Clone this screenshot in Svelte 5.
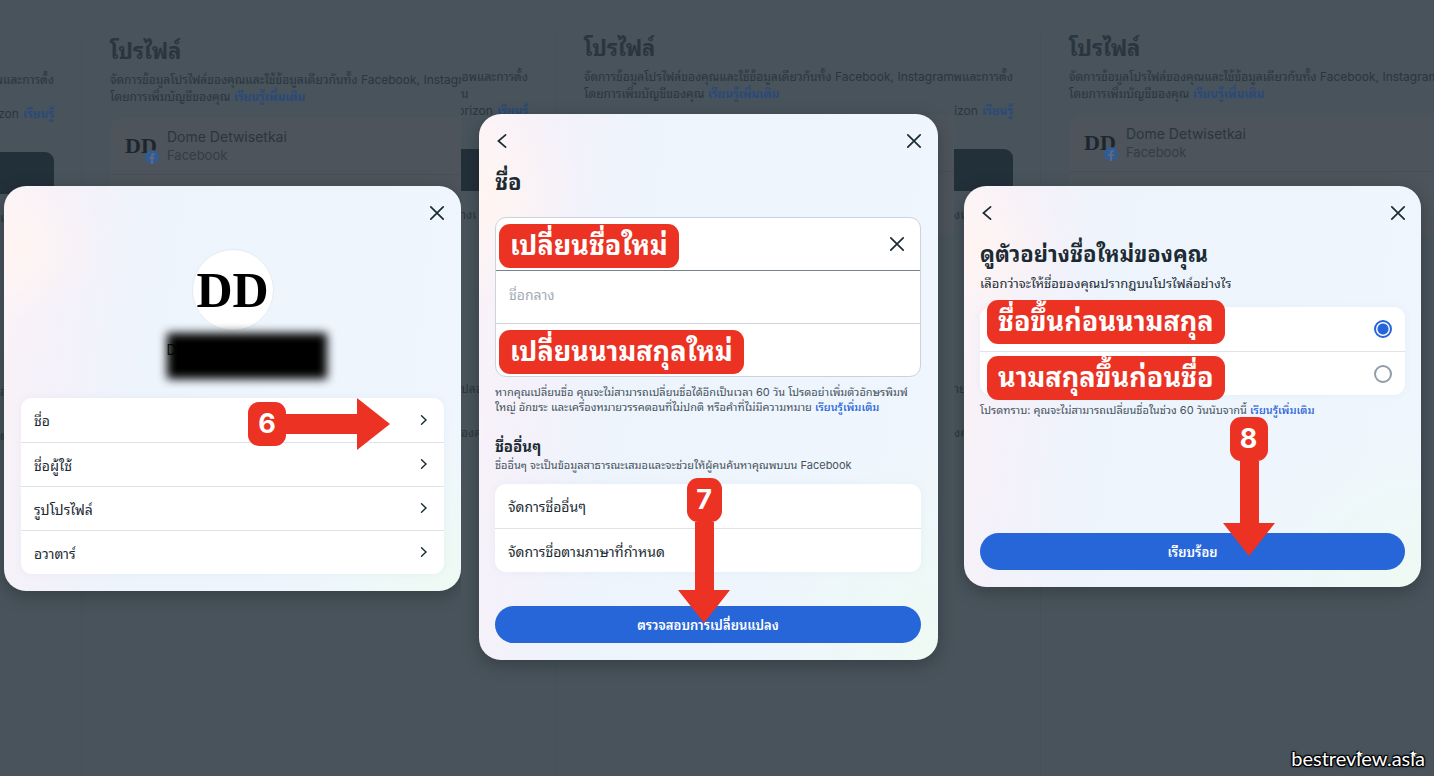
<script lang="ts">
	const rows = ['ชื่อ', 'ชื่อผู้ใช้', 'รูปโปรไฟล์', 'อวาตาร์'];
	const otherNames = ['จัดการชื่ออื่นๆ', 'จัดการชื่อตามภาษาที่กำหนด'];

	const orders = [
		{ value: 'first', label: 'ชื่อขึ้นก่อนนามสกุล' },
		{ value: 'last', label: 'นามสกุลขึ้นก่อนชื่อ' }
	];

	let order = $state('first');
	let firstName = $state('');
	let middleName = $state('');
	let lastName = $state('');
</script>

{#snippet closeIcon()}
	<svg width="16" height="16" viewBox="0 0 16 16" aria-hidden="true">
		<path d="M1.8 1.8l12.4 12.4M14.2 1.8L1.8 14.2" />
	</svg>
{/snippet}

{#snippet backIcon()}
	<svg width="16" height="16" viewBox="0 0 16 16" aria-hidden="true">
		<path d="M10.6 1.8L3.4 8l7.2 6.2" />
	</svg>
{/snippet}

{#snippet header(back)}
	<header>
		{#if back}
			<button class="icon" aria-label="ย้อนกลับ">{@render backIcon()}</button>
		{/if}
		<button class="icon close" aria-label="ปิด">{@render closeIcon()}</button>
	</header>
{/snippet}

<!-- The dimmed accounts page behind each dialog -->
{#snippet page(top, middle, horizon, cut)}
	<div class="page">
		<aside>
			<p class="end">{top}</p>
			<p>{middle}</p>
			<p class="end">{horizon} <a href="#learn">เรียนรู้</a></p>
			<div class="nav"></div>
			<p class="cut">{cut[0]}</p>
			<p class="cut far">{cut[1]}</p>
			<p class="cut">{cut[2]}</p>
		</aside>
		<main>
			<h2>โปรไฟล์</h2>
			<p>จัดการข้อมูลโปรไฟล์ของคุณและใช้ข้อมูลเดียวกันทั้ง Facebook, Instagram</p>
			<p>โดยการเพิ่มบัญชีของคุณ <a href="#learn">เรียนรู้เพิ่มเติม</a></p>
			<div class="profile">
				<div class="person">
					<div class="mini">
						DD
						<svg width="14" height="14" viewBox="0 0 14 14" aria-hidden="true">
							<circle cx="7" cy="7" r="7" fill="#315b92" />
							<path
								d="M6 14V9H4.4V7H6V5.7C6 4 7 3.1 8.5 3.1l1.3.1v1.7H9c-.8 0-1 .5-1 1V7h1.8l-.3 2H8v5z"
								fill="#5b6a7c"
							/>
						</svg>
					</div>
					<div>
						<div class="who">Dome Detwisetkai</div>
						<div class="where">Facebook</div>
					</div>
				</div>
			</div>
		</main>
	</div>
{/snippet}

{#snippet arrowRight(step)}
	<div class="marker right">
		<span class="step">{step}</span>
		<svg width="104" height="52" viewBox="0 0 104 52" aria-hidden="true">
			<path d="M0 16h71V0l33 26-33 26V36H0z" />
		</svg>
	</div>
{/snippet}

{#snippet arrowDown(step, shaft, place)}
	<div class="marker down {place}">
		<span class="step">{step}</span>
		<svg width="52" height={shaft + 33} viewBox="0 0 52 {shaft + 33}" aria-hidden="true">
			<path d="M17 0v{shaft}H0l26 33 26-33H36V0z" />
		</svg>
	</div>
{/snippet}

<div class="board">
	<div class="panel first">
		{@render page('พและการตั้ง', '', 'zon', ['เ', 'อ', 'ต'])}
		<section class="dialog" aria-label="โปรไฟล์">
			{@render header(false)}
			<div class="avatar">DD</div>
			<div class="redacted"><span>D</span></div>
			<ul class="list">
				{#each rows as row, i}
					<li>
						<button class="row">
							{row}
							<svg width="8" height="12" viewBox="0 0 8 12" aria-hidden="true">
								<path d="M1.5 1.8L6 6l-4.5 4.2" />
							</svg>
						</button>
						{#if i === 0}{@render arrowRight(6)}{/if}
					</li>
				{/each}
			</ul>
		</section>
	</div>

	<div class="panel second">
		{@render page('อพและการตั้ง', 'น', 'orizon', ['างเ', 'ปลอ', 'องค'])}
		<section class="dialog" aria-labelledby="name-title">
			{@render header(true)}
			<h1 id="name-title">ชื่อ</h1>
			<div class="fields">
				<div class="field active">
					<input type="text" aria-labelledby="tag-first" bind:value={firstName} />
					<span class="tag" id="tag-first">เปลี่ยนชื่อใหม่</span>
					<button class="icon" aria-label="ล้าง" onclick={() => (firstName = '')}>
						{@render closeIcon()}
					</button>
				</div>
				<div class="field">
					<input
						type="text"
						placeholder="ชื่อกลาง"
						aria-label="ชื่อกลาง"
						bind:value={middleName}
					/>
				</div>
				<div class="field">
					<input type="text" aria-labelledby="tag-last" bind:value={lastName} />
					<span class="tag" id="tag-last">เปลี่ยนนามสกุลใหม่</span>
				</div>
			</div>
			<p class="note">
				หากคุณเปลี่ยนชื่อ คุณจะไม่สามารถเปลี่ยนชื่อได้อีกเป็นเวลา 60 วัน โปรดอย่าเพิ่มตัวอักษรพิมพ์<br />
				ใหญ่ อักขระ และเครื่องหมายวรรคตอนที่ไม่ปกติ หรือคำที่ไม่มีความหมาย
				<a href="#learn">เรียนรู้เพิ่มเติม</a>
			</p>
			<h3>ชื่ออื่นๆ</h3>
			<p class="note tight">ชื่ออื่นๆ จะเป็นข้อมูลสาธารณะเสมอและจะช่วยให้ผู้คนค้นหาคุณพบบน Facebook</p>
			<ul class="list">
				{#each otherNames as name}
					<li><button class="row">{name}</button></li>
				{/each}
			</ul>
			<div class="action">
				<button class="primary">ตรวจสอบการเปลี่ยนแปลง</button>
				{@render arrowDown(7, 68, 'seven')}
			</div>
		</section>
	</div>

	<div class="panel third">
		{@render page('พและการตั้ง', '', 'rizon', ['งเ', 'าย', 'งค'])}
		<section class="dialog" aria-labelledby="preview-title">
			{@render header(true)}
			<h1 id="preview-title">ดูตัวอย่างชื่อใหม่ของคุณ</h1>
			<p class="lead">เลือกว่าจะให้ชื่อของคุณปรากฏบนโปรไฟล์อย่างไร</p>
			<ul class="list">
				{#each orders as item}
					<li>
						<label class="row">
							<span class="tag">{item.label}</span>
							<input type="radio" name="order" value={item.value} bind:group={order} />
						</label>
					</li>
				{/each}
			</ul>
			<p class="note">
				โปรดทราบ: คุณจะไม่สามารถเปลี่ยนชื่อในช่วง 60 วันนับจากนี้
				<a href="#learn">เรียนรู้เพิ่มเติม</a>
			</p>
			<div class="action">
				<button class="primary">เรียบร้อย</button>
				{@render arrowDown(8, 62, 'eight')}
			</div>
		</section>
	</div>

	<div class="watermark">bestrev<span class="star">i</span>ew.as<span class="star">i</span>a</div>
</div>

<style>
	:global(body) {
		margin: 0;
		background: #48535b;
	}

	.board {
		position: relative;
		display: grid;
		grid-template-columns: 461fr 493fr 480fr;
		min-height: 100vh;
		font-family: Inter, 'Noto Sans Thai Looped', 'Noto Looped Thai', Loma, 'Noto Sans Thai', 'Noto Sans', sans-serif;
		color: #1c2b33;
	}

	h1,
	h2,
	h3,
	p,
	ul {
		margin: 0;
		padding: 0;
	}

	ul {
		list-style: none;
	}

	button,
	input {
		font: inherit;
		color: inherit;
	}

	a {
		color: #2360d6;
		font-weight: 500;
		text-decoration: none;
	}

	svg {
		display: block;
		flex: none;
	}

	/* Page and dialog share one grid cell */
	.panel {
		display: grid;
		grid-template: 1fr / minmax(0, 1fr);
		align-items: center;
		overflow: hidden;
	}

	.panel > :global(*) {
		grid-area: 1 / 1;
	}

	/* Dimmed page */
	.page {
		align-self: stretch;
		display: grid;
		grid-template-columns: 95px minmax(0, 1fr);
		padding-top: 34px;
		background: #48535b;
		color: #2a363f;
		font-size: 12px;
		line-height: 17px;
		white-space: nowrap;
		overflow: hidden;
	}

	.first .page {
		grid-template-columns: 82px minmax(0, 1fr);
		padding-top: 37px;
	}

	.third .page {
		grid-template-columns: 87px minmax(0, 1fr);
	}

	.page a {
		color: #27497c;
		font-weight: 600;
	}

	aside {
		padding: 34px 27px 0 0;
		border-right: 1px solid #465058;
		box-sizing: border-box;
	}

	aside p {
		height: 17px;
	}

	aside .end {
		display: flex;
		justify-content: flex-end;
		gap: 4px;
	}

	aside .nav {
		height: 42px;
		margin-top: 30px;
		border-radius: 0 9px 0 0;
		background: #22303a;
	}

	aside .cut {
		margin: 15px 0 27px;
	}

	aside .far {
		margin-top: 157px;
	}

	main {
		padding-left: 28px;
	}

	h2 {
		height: 34px;
		font-size: 22px;
		line-height: 28px;
	}

	.profile {
		height: 120px;
		margin-top: 13px;
		border-radius: 10px 0 0 10px;
		background: #4d545b;
	}

	.person {
		display: flex;
		align-items: center;
		gap: 8px;
		height: 56px;
		padding-left: 15px;
		border-bottom: 1px solid #474f57;
	}

	.mini {
		position: relative;
		width: 34px;
		color: #1e262d;
		font: bold 22px / 28px 'Liberation Serif', serif;
	}

	.mini svg {
		position: absolute;
		right: 0;
		bottom: -4px;
	}

	.who {
		font-size: 14px;
		line-height: 18px;
	}

	.where {
		font-size: 13px;
		line-height: 18px;
		color: #333d46;
	}

	/* Dialogs */
	.dialog {
		position: relative;
		box-sizing: border-box;
		margin: 0 16px 3px 18px;
		padding: 0 17px 17px 16px;
		border-radius: 22px;
		background:
			radial-gradient(ellipse at 100% 100%, #eefaf3 0, #eefaf300 30%),
			radial-gradient(ellipse at 0 15%, #fff5f2 0, #fff5f200 16%),
			linear-gradient(97deg, #fbf3f7 0, #f4f1fa 15%, #edf4fc 33%, #eff6fe 100%);
		box-shadow: 0 5px 18px #00000040;
	}

	.first .dialog {
		margin: 0 0 0 4px;
		padding-left: 17px;
	}

	.third .dialog {
		margin: 0 13px 3px 10px;
		padding-right: 16px;
	}

	header {
		display: flex;
		align-items: center;
		height: 54px;
		margin-right: -1px;
	}

	.icon {
		display: grid;
		place-items: center;
		padding: 0;
		border: 0;
		background: none;
		cursor: pointer;
	}

	.icon path,
	.row path {
		fill: none;
		stroke: #1c2b33;
		stroke-width: 1.7;
		stroke-linecap: round;
	}

	.row path {
		stroke-width: 1.4;
	}

	.close {
		margin-left: auto;
	}

	h1 {
		font-size: 22px;
		line-height: 28px;
	}

	h3 {
		margin-top: 22px;
		font-size: 15px;
		line-height: 20px;
	}

	.avatar {
		box-sizing: border-box;
		width: 82px;
		height: 82px;
		margin: 9px auto 0;
		border: 1px solid #e6ebf1;
		border-radius: 50%;
		background: #fff;
		color: #000;
		font: bold 50px / 80px 'Liberation Serif', serif;
		display: flex;
		justify-content: center;
	}

	.redacted {
		position: relative;
		width: 160px;
		height: 46px;
		margin: 2px auto 19px;
		left: 14px;
		font-size: 14px;
		line-height: 34px;
	}

	.redacted::before {
		content: '';
		position: absolute;
		inset: 0;
		background: #000;
		filter: blur(5px);
	}

	.list {
		border-radius: 11px;
		background: #fff;
		box-shadow: 0 0 8px #3c50780d;
	}

	.list li {
		position: relative;
	}

	.list li + li {
		border-top: 1px solid #dee3e8;
	}

	.row {
		display: flex;
		align-items: center;
		justify-content: space-between;
		box-sizing: border-box;
		width: 100%;
		height: 44px;
		padding: 0 16px 0 13px;
		border: 0;
		background: none;
		font-size: 14px;
		text-align: left;
		cursor: pointer;
	}

	.list li + li .row {
		height: 43px;
	}

	.fields {
		margin-top: 21px;
		border: 1px solid #ccd3da;
		border-radius: 11px;
		background: #fff;
	}

	.field {
		position: relative;
		display: flex;
		align-items: center;
		height: 52px;
		padding: 0 15px 0 13px;
	}

	.field + .field {
		border-top: 1px solid #ccd3da;
	}

	.field.active + .field {
		border-top-color: #77828d;
	}

	.field input {
		flex: 1;
		min-width: 0;
		padding: 0 0 4px;
		border: 0;
		outline: 0;
		background: none;
		font-size: 14px;
	}

	.field input::placeholder {
		color: #a3abb3;
		opacity: 1;
	}

	.lead {
		margin: 5px 0 14px;
		font-size: 13px;
		line-height: 20px;
	}

	.note {
		margin-top: 8px;
		color: #465360;
		font-size: 11px;
		line-height: 15px;
		white-space: nowrap;
	}

	.note.tight {
		margin: 1px 0 11px;
	}

	.action {
		position: relative;
		margin-top: 34px;
	}

	.third .action {
		margin-top: 115px;
	}

	.primary {
		display: block;
		width: 100%;
		height: 37px;
		border: 0;
		border-radius: 19px;
		background: #2766d9;
		color: #fff;
		font-size: 13px;
		font-weight: 600;
		cursor: pointer;
	}

	input[type='radio'] {
		appearance: none;
		width: 18px;
		height: 18px;
		margin: 0 -3px 0 auto;
		border: 2px solid #929ca6;
		border-radius: 50%;
		background: #fff;
	}

	input[type='radio']:checked {
		border-color: #2766d9;
		background: radial-gradient(circle, #2766d9 5px, #fff 6px);
	}

	/* Red callouts */
	.tag {
		position: absolute;
		top: 6px;
		left: 3px;
		padding: 0 11px;
		border-radius: 11px;
		background: #eb3223;
		color: #fff;
		font-size: 27px;
		font-weight: 700;
		line-height: 44px;
		white-space: nowrap;
	}

	.row .tag {
		top: -7px;
		left: 7px;
	}

	.list li + li .tag {
		top: 4px;
	}

	.marker {
		position: absolute;
		z-index: 1;
		display: flex;
		align-items: center;
		pointer-events: none;
	}

	.marker path {
		fill: #eb3223;
	}

	.step {
		width: 38px;
		border-radius: 11px;
		background: #eb3223;
		color: #fff;
		font: bold 27px / 44px Inter, sans-serif;
		text-align: center;
	}

	.right {
		top: 0;
		right: 54px;
	}

	.down {
		flex-direction: column;
	}

	.seven {
		bottom: 20px;
		left: calc(50% - 30px);
	}

	.seven .step {
		width: 35px;
	}

	.eight {
		bottom: 14px;
		left: calc(50% + 30px);
	}

	.watermark {
		position: absolute;
		right: 9px;
		bottom: 5px;
		color: #fff;
		font: 20px / 26px Lato, sans-serif;
		text-shadow:
			1px 1px 1px #000,
			-1px -1px 1px #000,
			1px -1px 1px #000,
			-1px 1px 1px #000,
			0 0 3px #000;
	}

	.star {
		position: relative;
	}

	.star::after {
		content: '★';
		position: absolute;
		top: 2px;
		left: -1px;
		font: 9px / 12px 'DejaVu Sans', sans-serif;
		text-shadow: none;
	}
</style>
